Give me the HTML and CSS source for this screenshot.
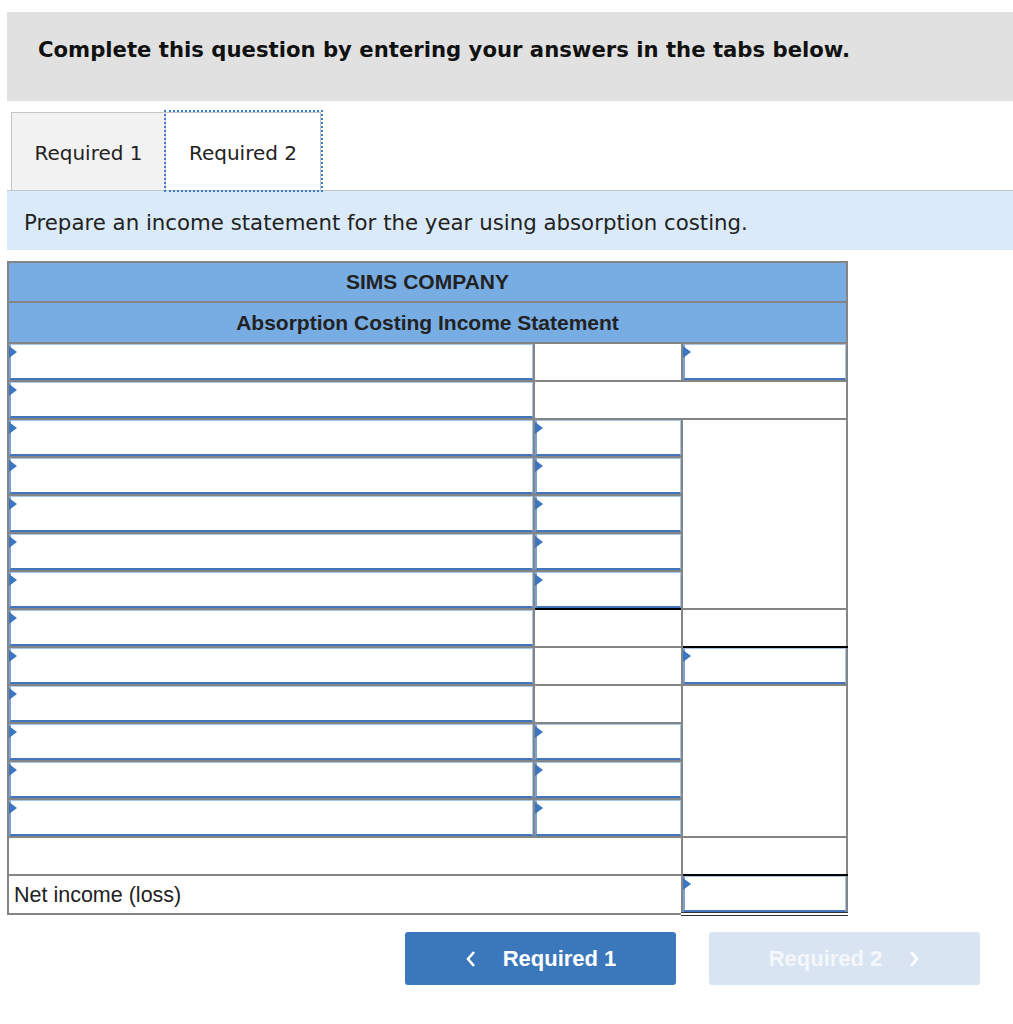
FILE: index.html
```html
<!DOCTYPE html>
<html lang="en">
<head>
<meta charset="utf-8">
<title>Absorption Costing</title>
<link rel="stylesheet" href="styles.css">
</head>
<body>
<div class="page">
  <div class="banner">Complete this question by entering your answers in the tabs below.</div>
  <div class="tabs">
    <div class="tab">Required 1</div>
    <div class="tab active">Required 2</div>
  </div>
  <div class="instr">Prepare an income statement for the year using absorption costing.</div>
  <table class="stmt">
    <colgroup><col class="c1"><col class="c2"><col class="c3"></colgroup>
    <tr class="hd"><th colspan="3" class="first">SIMS COMPANY</th></tr>
    <tr class="hd"><th colspan="3">Absorption Costing Income Statement</th></tr>
    <tr><td class="in"><div class="box"></div></td><td></td><td class="in"><div class="box"></div></td></tr>
    <tr><td class="in"><div class="box"></div></td><td colspan="2"></td></tr>
    <tr><td class="in"><div class="box"></div></td><td class="in"><div class="box"></div></td><td rowspan="5"></td></tr>
    <tr><td class="in"><div class="box"></div></td><td class="in"><div class="box"></div></td></tr>
    <tr><td class="in"><div class="box"></div></td><td class="in"><div class="box"></div></td></tr>
    <tr><td class="in"><div class="box"></div></td><td class="in"><div class="box"></div></td></tr>
    <tr><td class="in"><div class="box"></div></td><td class="in sum"><div class="box"></div></td></tr>
    <tr><td class="in"><div class="box"></div></td><td></td><td class="sum"></td></tr>
    <tr><td class="in"><div class="box"></div></td><td></td><td class="in"><div class="box"></div></td></tr>
    <tr><td class="in"><div class="box"></div></td><td></td><td rowspan="4"></td></tr>
    <tr><td class="in"><div class="box"></div></td><td class="in"><div class="box"></div></td></tr>
    <tr><td class="in"><div class="box"></div></td><td class="in"><div class="box"></div></td></tr>
    <tr><td class="in"><div class="box"></div></td><td class="in"><div class="box"></div></td></tr>
    <tr><td colspan="2"></td><td class="sum"></td></tr>
    <tr><td colspan="2" class="label">Net income (loss)</td><td class="in total"><div class="box"></div></td></tr>
  </table>
  <div class="nav">
    <button class="btn prev" type="button">
      <svg class="chev" width="12" height="18" viewBox="0 0 12 18"><polyline points="9,2 3,9 9,16" fill="none" stroke="#fff" stroke-width="2.6"/></svg>
      <span>Required 1</span>
    </button>
    <button class="btn next" type="button">
      <span>Required 2</span>
      <svg class="chev" width="12" height="18" viewBox="0 0 12 18"><polyline points="3,2 9,9 3,16" fill="none" stroke="#fff" stroke-width="2.6"/></svg>
    </button>
  </div>
</div>
</body>
</html>
```

FILE: styles.css
```css
html, body {
  margin: 0;
  padding: 0;
  background: #fff;
}
.page {
  margin-left: 7px;
  width: 1006px;
  padding-top: 12px;
  font-family: "DejaVu Sans", Verdana, sans-serif;
  color: #222;
}
.banner {
  background: #e1e1e1;
  height: 89px;
  box-sizing: border-box;
  padding-left: 31px;
  padding-bottom: 14px;
  display: flex;
  align-items: center;
  font-weight: bold;
  font-size: 21.2px;
  color: #111;
}
.tabs {
  display: flex;
  margin-top: 11px;
  padding-left: 4px;
}
.tab {
  width: 155px;
  height: 78px;
  box-sizing: border-box;
  display: flex;
  align-items: center;
  justify-content: center;
  font-size: 20px;
  color: #222;
  background: #f2f2f2;
  border: 1px solid #c6c6c6;
  border-bottom: none;
  padding-top: 2px;
}
.tab.active {
  background: #fff;
  outline: 2px dotted #3d7cc9;
  outline-offset: 0;
  border-left: none;
}
.instr {
  background: #daeaf8;
  border-top: 1px solid #c6c6c6;
  height: 60px;
  box-sizing: border-box;
  padding-left: 17px;
  padding-top: 3px;
  display: flex;
  align-items: center;
  font-size: 21.3px;
  color: #222;
}
.stmt {
  margin-top: 11px;
  width: 839px;
  border-collapse: collapse;
  table-layout: fixed;
  font-family: "Liberation Sans", Arial, sans-serif;
}
.c1 { width: 526px; }
.c2 { width: 148px; }
.c3 { width: 165px; }
.stmt th, .stmt td {
  border: 2px solid #858585;
  padding: 0;
}
.stmt th {
  background: #78ade4;
  height: 39px;
  font-size: 21px;
  font-weight: bold;
  color: #222;
  text-align: center;
}
.stmt th.first {
  height: 38px;
}
.stmt td {
  height: 36px;
  background: #fff;
}
.stmt td.in {
  vertical-align: top;
}
.box {
  position: relative;
  height: 36px;
  box-sizing: border-box;
  border: 1px solid #a7c6ea;
  border-left: 2px solid #7aa3d8;
  border-bottom: 2px solid #4176bd;
}
.box::before {
  content: "";
  position: absolute;
  left: -2px;
  top: 1px;
  border-left: 8px solid #3a76c2;
  border-top: 6px solid transparent;
  border-bottom: 6px solid transparent;
}
.stmt td.sum {
  border-bottom: 2px solid #000;
}
.stmt td.total {
  border-bottom: 4px double #333;
}
.stmt td.label {
  font-size: 21.5px;
  color: #222;
  padding-left: 5px;
  padding-top: 1px;
}
.nav {
  display: flex;
  gap: 33px;
  margin-top: 16px;
  padding-left: 398px;
}
.btn {
  width: 271px;
  height: 53px;
  border: none;
  border-radius: 3px;
  display: flex;
  align-items: center;
  justify-content: center;
  gap: 26px;
  font-family: "Liberation Sans", Arial, sans-serif;
  font-weight: bold;
  font-size: 22px;
  color: #fff;
  padding: 0;
}
.btn.prev {
  background: #3b77bb;
}
.btn.next {
  background: #d9e4f2;
  color: #f4f7fb;
}
```
